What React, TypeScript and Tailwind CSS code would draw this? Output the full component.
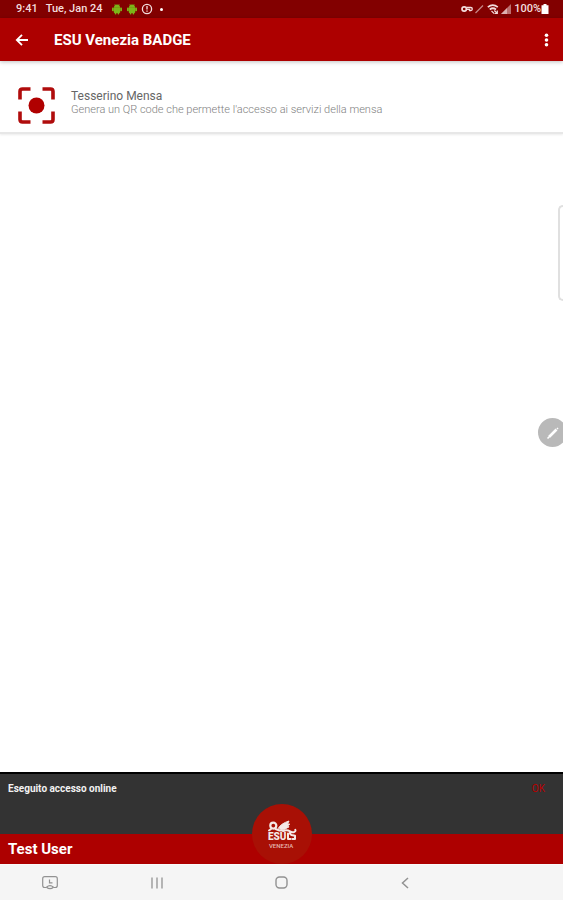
import React from "react";

const AndroidIcon = () => (
  <svg className="h-3 w-3" viewBox="0 0 12 12" fill="#7cb518" aria-hidden="true">
    <path d="M3 4.4a3 3 0 0 1 6 0z" />
    <path d="M2.8 4.3h6.4v4.9a.8.8 0 0 1-.8.8H3.6a.8.8 0 0 1-.8-.8z" />
    <rect x="1" y="4.6" width="1.8" height="3.6" rx=".8" />
    <rect x="9.2" y="4.6" width="1.8" height="3.6" rx=".8" />
    <rect x="3.8" y="9" width="1.6" height="2.4" rx=".7" />
    <rect x="6.6" y="9" width="1.6" height="2.4" rx=".7" />
    <path d="M3.6 1l1 1.4M8.4 1l-1 1.4" stroke="#7cb518" strokeWidth=".6" />
  </svg>
);

const StatusBar = () => (
  <div className="flex h-[18px] items-center justify-between bg-[#820000] pl-4 pr-[14px] text-[11px] font-medium text-[#f3dede]">
    <div className="flex items-center">
      <span>9:41</span>
      <span className="ml-2">Tue, Jan 24</span>
      <div className="ml-2 flex items-center gap-[3px]">
        <AndroidIcon />
        <AndroidIcon />
        <svg className="h-3 w-3" viewBox="0 0 12 12" fill="none" stroke="currentColor" aria-hidden="true">
          <circle cx="6" cy="6" r="4.6" strokeWidth="1.3" />
          <path d="M6 3v3.4M6 7.6v1.2" strokeWidth="1.3" />
        </svg>
        <span className="ml-1 h-[3px] w-[3px] rounded-full bg-white" />
      </div>
    </div>
    <div className="flex items-center">
      <svg className="h-3 w-3" viewBox="0 0 12 12" fill="none" stroke="currentColor" aria-hidden="true">
        <circle cx="3.2" cy="6" r="2.2" strokeWidth="1.7" />
        <path d="M5.4 4.5h4.4q1.5 0 1.5 1.5T9.8 7.5H8.5V6.4H5.4" strokeWidth="1.3" />
      </svg>
      <svg className="h-3 w-3 opacity-60" viewBox="0 0 12 12" fill="none" stroke="currentColor" aria-hidden="true">
        <path d="M2.5 10L10 2.5" strokeWidth="1.3" />
      </svg>
      <svg className="ml-[2px] h-3 w-3" viewBox="0 0 12 12" fill="none" stroke="currentColor" aria-hidden="true">
        <path d="M.8 4.2q5-4 10 0M2.8 6.5q3-2.5 6.2 0" strokeWidth="1.7" />
        <path d="M4.5 8l2.8 2.6M7.3 7.5l3 3M10.3 7.5v3H7.8" strokeWidth="1.2" />
      </svg>
      <svg className="ml-px h-3 w-3" viewBox="0 0 12 12" fill="currentColor" aria-hidden="true">
        <path d="M1 11L11 1v10z" opacity=".5" />
        <path d="M1 11l6-6v6z" opacity=".6" />
      </svg>
      <span className="ml-[2px]">100%</span>
      <svg className="h-[10px] w-2" viewBox="0 0 8 10" fill="#fff" aria-hidden="true">
        <path d="M2.5 0h3v1.2h2V10H.5V1.2h2z" />
      </svg>
    </div>
  </div>
);

const AppBar = () => (
  <header className="relative z-10 flex h-[43px] items-center bg-[#ad0000] pl-3 pr-1 text-white shadow-[0_1px_4px_rgba(0,0,0,0.25)]">
    <button type="button" aria-label="Indietro" className="flex h-8 w-5 items-center justify-center">
      <svg className="h-4 w-4" viewBox="0 0 16 16" fill="none" stroke="currentColor" strokeWidth="1.8">
        <path d="M14 8H3M8 2.8L2.8 8 8 13.2" />
      </svg>
    </button>
    <h1 className="ml-[22px] flex-1 text-[15px] font-bold leading-5">ESU Venezia BADGE</h1>
    <button type="button" aria-label="Altre opzioni" className="flex h-8 w-6 items-center justify-center">
      <svg className="h-4 w-4" viewBox="0 0 16 16" fill="currentColor">
        <circle cx="7.5" cy="3.2" r="1.8" />
        <circle cx="7.5" cy="8" r="1.8" />
        <circle cx="7.5" cy="12.8" r="1.8" />
      </svg>
    </button>
  </header>
);

const BadgeItem = () => (
  <a href="#tesserino" className="flex items-center border-b-2 border-[#e7e7e7] pb-2 pl-[18px] pt-[26px] shadow-[0_1px_2px_rgba(0,0,0,0.08)]">
    <svg className="h-[37px] w-[37px] shrink-0" viewBox="0 0 37 37" fill="none" stroke="#b00c0c" strokeWidth="3.6" aria-hidden="true">
      <path d="M2 12.5V4.5Q2 2 4.5 2H12.5M24.5 2h8Q35 2 35 4.5V12.5M35 24.5v8q0 2.5-2.5 2.5H24.5M12.5 35H4.5Q2 35 2 32.5V24.5" />
      <circle cx="18.5" cy="18.5" r="8" fill="#b00000" stroke="none" />
    </svg>
    <span className="mb-[6px] ml-4 flex flex-col">
      <span className="text-[12px] leading-[14px] text-[#666]">Tesserino Mensa</span>
      <span className="text-[11px] font-light leading-[14px] text-[#808080]">
        Genera un QR code che permette l'accesso ai servizi della mensa
      </span>
    </span>
  </a>
);

const EdgePanelHandle = () => (
  <div className="absolute right-0 top-36 h-24 w-[5px] rounded-l-[5px] border-2 border-r-0 border-[#e0e0e0] bg-white" />
);

const PenButton = () => (
  <div className="absolute right-0 top-[357px] h-[29px] w-[25px] overflow-hidden">
    <button type="button" aria-label="Penna" className="flex h-[29px] w-[29px] items-center justify-center rounded-full bg-[#b9b9b9] text-white">
      <svg className="h-4 w-4" viewBox="0 0 16 16" fill="none" stroke="currentColor">
        <path d="M4 12L11.5 4.5" strokeWidth="2.6" />
        <path d="M12 4l1-1M2.5 13.5L4 12" strokeWidth="1.6" />
      </svg>
    </button>
  </div>
);

const LionLogo = () => (
  <svg className="h-[30px] w-[30px]" viewBox="0 0 30 30" fill="none" stroke="#f5e9e7" strokeLinecap="round" strokeLinejoin="round" aria-hidden="true">
    <circle cx="6.3" cy="5.6" r="3" strokeWidth="2.2" />
    <path d="M4 9L2 10.5M8.5 9l4 1.5h5" strokeWidth="2" />
    <path d="M11.5 8Q14 3.5 22 1L20.5 4h2.2l-2.4 2.5 1.8.3Q18 10 14 9.500z" fill="#f5e9e7" strokeWidth="1" />
    <path d="M16 11q4-1.5 7 .3 2 1.5 4 .8 2-.8 1.300-2.300M23 12q-.5 2 1.500 3l3.500.8v3.200h-2.500M21 13.500v5.500h2.500" strokeWidth="2" />
    <text x="1" y="20" fontSize="10" fontWeight="900" fill="#f5e9e7" stroke="none">ESU</text>
    <text x="2" y="28" fontSize="6" fontWeight="500" fill="#e5b5b0" stroke="none">VENEZIA</text>
  </svg>
);

const Footer = () => (
  <footer className="relative">
    <div className="flex h-[62px] items-start justify-between border-t-2 border-black bg-[#333] px-2 pt-[7px] text-[10px] leading-4">
      <span className="font-bold text-[#f2f2f2]">Eseguito accesso online</span>
      <button type="button" className="mr-[10px] text-[#b80000]">OK</button>
    </div>
    <div className="flex h-[30px] items-center bg-[#ad0000] px-2 text-[15px] font-bold text-white">Test User</div>
    <div className="absolute bottom-0 left-1/2 flex h-[60px] w-[60px] -translate-x-1/2 flex-col items-center rounded-full bg-[#a81005] pt-4">
      <LionLogo />
    </div>
  </footer>
);

const NavigationBar = () => (
  <nav className="grid h-9 grid-cols-[10fr_13fr_13fr_13fr_10fr] place-items-center border-t border-[#fafafa] bg-[#f5f5f5] text-[#929292]">
    <button type="button" aria-label="Schermo" className="ml-1 flex h-6 w-6 items-center justify-center">
      <svg className="h-4 w-4" viewBox="0 0 16 16" fill="none" stroke="currentColor" strokeWidth="1.2">
        <path d="M4 12.5H2.7q-2 0-2-2V3.7q0-2 2-2h10.6q2 0 2 2v6.8q0 2-2 2H12" />
        <path d="M7.5 4.5v3.3h3" />
        <path d="M4.5 12.2q3.5-3 7 0-3.5 3-7 0z" />
      </svg>
    </button>
    <button type="button" aria-label="Recenti" className="flex h-6 w-6 items-center justify-center">
      <svg className="h-3 w-3" viewBox="0 0 12 12" fill="none" stroke="currentColor" strokeWidth="1.3">
        <path d="M1 .5v11M6 .5v11M11 .5v11" />
      </svg>
    </button>
    <button type="button" aria-label="Home" className="flex h-6 w-6 items-center justify-center">
      <svg className="h-[13px] w-[13px]" viewBox="0 0 13 13" fill="none" stroke="currentColor" strokeWidth="1.4">
        <rect x="1" y="1" width="11" height="11" rx="3.5" />
      </svg>
    </button>
    <button type="button" aria-label="Indietro" className="flex h-6 w-6 items-center justify-center">
      <svg className="h-3 w-3" viewBox="0 0 12 12" fill="none" stroke="currentColor" strokeWidth="1.5">
        <path d="M8 1L2.5 6 8 11" />
      </svg>
    </button>
  </nav>
);

const App = () => (
  <div className="flex min-h-screen flex-col bg-white font-[Roboto,sans-serif]">
    <StatusBar />
    <AppBar />
    <main className="relative flex-1">
      <BadgeItem />
      <EdgePanelHandle />
      <PenButton />
    </main>
    <Footer />
    <NavigationBar />
  </div>
);

export default App;
